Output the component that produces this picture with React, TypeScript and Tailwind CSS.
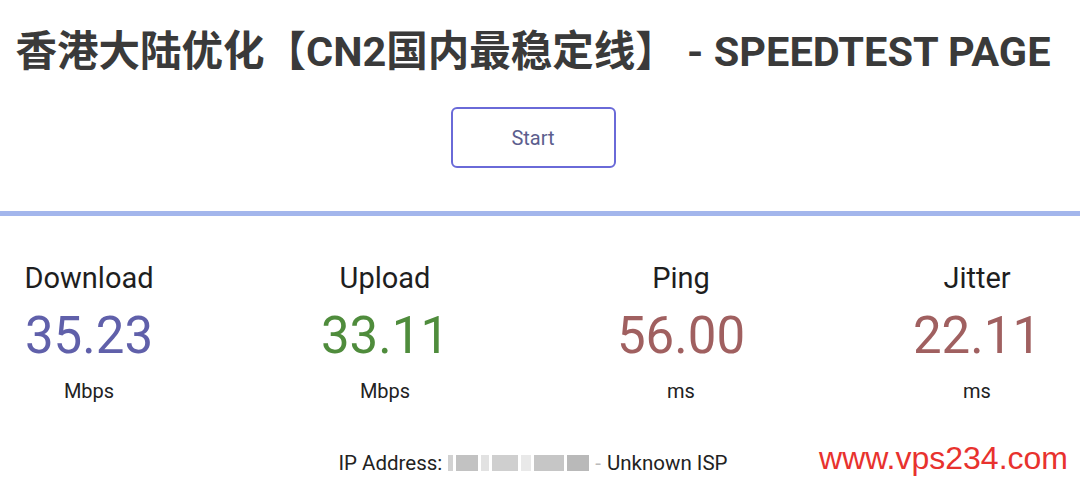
const metrics = [
  { label: "Download", value: "35.23", unit: "Mbps", color: "text-[#6060aa]" },
  { label: "Upload", value: "33.11", unit: "Mbps", color: "text-[#4f8c3c]" },
  { label: "Ping", value: "56.00", unit: "ms", color: "text-[#a06060]" },
  { label: "Jitter", value: "22.11", unit: "ms", color: "text-[#a06060]" },
];

// blurred IP blocks, as in the source shot
const ipBlocks = [
  "w-[5px] bg-[#c8c8c8]",
  "w-[22px] bg-[#b4b4b4]",
  "w-[8px] bg-[#dcdcdc]",
  "w-[26px] bg-[#c4c4c4]",
  "w-[10px] bg-[#e4e4e4]",
  "w-[30px] bg-[#b8b8b8]",
  "w-[22px] bg-[#a8a8a8]",
];

export default function App() {
  return (
    <div className="relative h-[484px] w-[1080px] overflow-hidden bg-white font-['Roboto','Noto_Sans_CJK_SC',sans-serif] text-[#222]">
      <h1 className="pt-[22px] pr-[14px] text-center text-[41.5px] font-bold leading-[60px] whitespace-nowrap text-[#3a3a3a]">
        香港大陆优化【CN2国内最稳定线】 - SPEEDTEST PAGE
      </h1>

      <div className="mt-[25px] flex justify-center pr-[14px]">
        <button className="h-[61px] w-[165px] rounded-[6px] border-2 border-[#6a6ad8] text-[20px] text-[#5c5e8e]">
          Start
        </button>
      </div>

      <div className="mt-[43px] h-[5px] w-full bg-[#a3b6ec]" />

      <div className="mt-[45px] flex gap-[168px] pl-[25px]">
        {metrics.map((m) => (
          <div key={m.label} className="flex w-[128px] flex-col items-center">
            <div className="text-[29px] leading-[34px] whitespace-nowrap text-[#1e1e1e]">{m.label}</div>
            <div className={`mt-[11px] text-[51px] leading-[60px] ${m.color}`}>{m.value}</div>
            <div className="mt-[13px] text-[20px] leading-[24px]">{m.unit}</div>
          </div>
        ))}
      </div>

      <div className="mt-[47px] flex items-center justify-center gap-[6px] pr-[14px] text-[20.5px] leading-[26px] text-[#222]">
        <span>IP Address:</span>
        <span className="flex h-[16px] items-center gap-[3px] opacity-80">
          {ipBlocks.map((c, i) => (
            <span key={i} className={`h-[16px] ${c}`} />
          ))}
        </span>
        <span className="text-[#bbb]">-</span>
        <span>Unknown ISP</span>
      </div>

      <div className="absolute bottom-[8px] right-[12px] font-['Liberation_Sans',Arial,sans-serif] text-[32px] leading-[36px] text-[#e8322e]">
        www.vps234.com
      </div>
    </div>
  );
}
